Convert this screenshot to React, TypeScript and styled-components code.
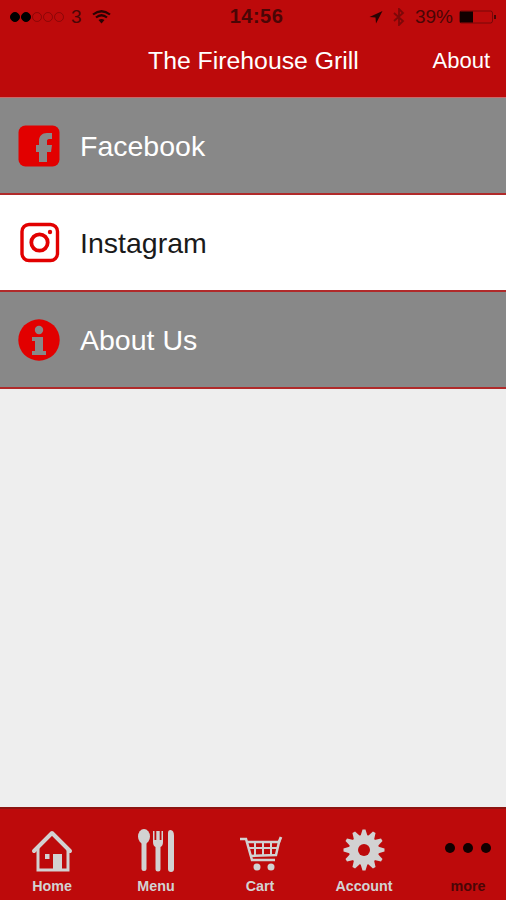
import React from "react";
import styled, { createGlobalStyle } from "styled-components";

const RED = "#bd0a0b";
const ICON_RED = "#e20000";
const GREY_ICON = "#d2d2d2";
const ROW_GREY = "#888888";
const DARK = "#4a0606";

const Global = createGlobalStyle`
  html, body { margin: 0; padding: 0; background: #eeeeee; }
  * { box-sizing: border-box; }
  body { font-family: "Liberation Sans", Arial, sans-serif; }
`;

const Screen = styled.div`
  width: 506px;
  height: 900px;
  display: flex;
  flex-direction: column;
  overflow: hidden;
  background: #eeeeee;
`;

const Header = styled.header`
  height: 98px;
  flex: none;
  background: ${RED};
  border-bottom: 1px solid #c96a6a;
  display: flex;
  flex-direction: column;
`;

const StatusBar = styled.div`
  height: 33px;
  padding: 0 9px 0 10px;
  display: grid;
  grid-template-columns: 1fr auto 1fr;
  align-items: center;
  color: ${DARK};
  font-size: 19px;
`;

const StatusLeft = styled.div`
  display: flex;
  align-items: center;
  gap: 7px;
`;

const StatusRight = styled.div`
  display: flex;
  align-items: center;
  justify-content: flex-end;
  gap: 6px;
`;

const Time = styled.span`
  padding-left: 6px;
  font-weight: 700;
  font-size: 20px;
  letter-spacing: 0.5px;
`;

const Dots = styled.div`
  display: flex;
  gap: 1px;
`;

const Dot = styled.span<{ $on?: boolean }>`
  width: 10px;
  height: 10px;
  border-radius: 50%;
  border: 1px solid #000;
  background: ${(p) => (p.$on ? "#000" : "transparent")};
  opacity: ${(p) => (p.$on ? 1 : 0.25)};
`;

const WifiGlyph = styled.svg`
  margin-left: 3px;
`;

const BluetoothGlyph = styled.svg`
  margin: 0 4px;
  opacity: 0.55;
`;

const NavBar = styled.div`
  flex: 1;
  display: flex;
  align-items: center;
  padding: 0 16px 8px 148px;
  justify-content: space-between;
  color: #fff;
`;

const Title = styled.span`
  font-size: 24.8px;
`;

const NavLink = styled.span`
  font-size: 22px;
`;

const List = styled.div`
  flex: 1;
`;

const Row = styled.div<{ $light?: boolean }>`
  height: 97px;
  padding: 1px 0 0 18px;
  display: flex;
  align-items: center;
  gap: 20px;
  background: ${(p) => (p.$light ? "#ffffff" : ROW_GREY)};
  color: ${(p) => (p.$light ? "#1a1a1a" : "#ffffff")};
  border-bottom: 2px solid #b02a2a;
  font-size: 28.5px;
`;

const RowLabel = styled.span`
  padding-top: 1px;
`;

const RowIcon = styled.svg`
  width: 42px;
  height: 42px;
  flex: none;
`;

const TabBar = styled.nav`
  height: 93px;
  flex: none;
  background: ${RED};
  border-top: 2px solid #8d1410;
  display: grid;
  grid-template-columns: repeat(5, 104px);
`;

const Tab = styled.div<{ $dark?: boolean }>`
  display: flex;
  flex-direction: column;
  align-items: center;
  justify-content: flex-end;
  padding-bottom: 6px;
  color: ${(p) => (p.$dark ? DARK : GREY_ICON)};
  font-size: 14.3px;
  font-weight: 700;
  gap: 3px;
`;

const TabIcon = styled.svg`
  height: 48px;
  width: 60px;
  flex: none;
`;

const FacebookIcon = () => (
  <RowIcon viewBox="0 0 42 42">
    <rect x="0.5" y="0.5" width="41" height="41" rx="7" fill={ICON_RED} />
    <path
      d="M21 37V27h-3v-7h3v-4c0-5 3-8 8-8h5v6h-3c-1.500 0-2 1-2 2v4h5l-1 7h-4v10z"
      fill={ROW_GREY}
    />
  </RowIcon>
);

const InstagramIcon = () => (
  <RowIcon viewBox="0 0 42 42">
    <rect x="4" y="2.500" width="35.500" height="36" rx="7" fill="none" stroke={ICON_RED} strokeWidth="3.400" />
    <circle cx="21.500" cy="20.500" r="8.200" fill="none" stroke={ICON_RED} strokeWidth="3.800" />
    <circle cx="32" cy="10" r="2.200" fill={ICON_RED} />
  </RowIcon>
);

const InfoIcon = () => (
  <RowIcon viewBox="0 0 42 42">
    <circle cx="21" cy="21" r="20.700" fill={ICON_RED} />
    <circle cx="21" cy="11" r="4.200" fill={ROW_GREY} />
    <path d="M14 18h11v14h3v4H14v-4h3v-10h-3z" fill={ROW_GREY} />
  </RowIcon>
);

const HomeIcon = () => (
  <TabIcon viewBox="0 0 60 48">
    <path
      d="M12 24 30 6l18 18"
      fill="none"
      stroke={GREY_ICON}
      strokeWidth="4"
      strokeLinecap="round"
      strokeLinejoin="round"
    />
    <path d="M16 21v22h30V21" fill="none" stroke={GREY_ICON} strokeWidth="3" />
    <rect x="31" y="27" width="9" height="16" fill={GREY_ICON} />
    <rect x="23" y="27" width="4.500" height="5" fill={GREY_ICON} />
  </TabIcon>
);

const MenuIcon = () => (
  <TabIcon viewBox="0 0 60 48">
    <ellipse cx="18" cy="9.500" rx="6" ry="7.500" fill={GREY_ICON} />
    <rect x="15.500" y="12" width="5" height="32" rx="2.500" fill={GREY_ICON} />
    <path
      d="M27 4h1.500v9h1.800V4h3.400v9h1.800V4H37v11q0 4-2.500 5v22a2.500 2.500 0 0 1-5 0V20q-2.500-1-2.500-5z"
      fill={GREY_ICON}
    />
    <path d="M42 42V6q0-3 2.500-3 3.500 0 3.500 6v33a3 3 0 0 1-6 0z" fill={GREY_ICON} />
  </TabIcon>
);

const CartIcon = () => (
  <TabIcon viewBox="0 0 60 48">
    <g fill="none" stroke={GREY_ICON} strokeWidth="2">
      <path d="M10 12h6l6 21h23" strokeWidth="2.500" />
      <path d="M17 15h32l-3 13-26 1" strokeWidth="2.500" />
      <path d="M18 21h30M25 15v14M33 15v14M41 15v13" />
    </g>
    <path d="M48.500 16l2.500-6" stroke={GREY_ICON} strokeWidth="2.800" />
    <circle cx="27" cy="40" r="3.500" fill={GREY_ICON} />
    <circle cx="41" cy="40" r="3.500" fill={GREY_ICON} />
  </TabIcon>
);

const gearTeeth = Array.from({ length: 12 }, (_, i) => i * 30);

const GearIcon = () => (
  <TabIcon viewBox="0 0 60 48">
    <g fill={GREY_ICON}>
      {gearTeeth.map((deg) => (
        <path key={deg} d="M26.200 10 28.500 2.500h3L33.800 10z" transform={`rotate(${deg} 30 23)`} />
      ))}
      <circle cx="30" cy="23" r="15" />
    </g>
    <circle cx="30" cy="23" r="6" fill={RED} />
  </TabIcon>
);

const MoreIcon = () => (
  <TabIcon viewBox="0 0 60 48">
    <circle cx="12" cy="21" r="5" fill="#120000" />
    <circle cx="30" cy="21" r="5" fill="#120000" />
    <circle cx="48" cy="21" r="5" fill="#120000" />
  </TabIcon>
);

const rows = [
  { label: "Facebook", icon: <FacebookIcon /> },
  { label: "Instagram", icon: <InstagramIcon />, light: true },
  { label: "About Us", icon: <InfoIcon /> },
];

const tabs = [
  { label: "Home", icon: <HomeIcon /> },
  { label: "Menu", icon: <MenuIcon /> },
  { label: "Cart", icon: <CartIcon /> },
  { label: "Account", icon: <GearIcon /> },
  { label: "more", icon: <MoreIcon />, dark: true },
];

const App = () => {
  return (
    <Screen>
      <Global />
      <Header>
        <StatusBar>
          <StatusLeft>
            <Dots>
              <Dot $on />
              <Dot $on />
              <Dot />
              <Dot />
              <Dot />
            </Dots>
            <span>3</span>
            <WifiGlyph width="19" height="15" viewBox="0 0 19 15">
              <path
                d="M1 5.500q8.500-6.500 17 0M4 8.500q5.500-4.500 11 0"
                fill="none"
                stroke="#2a0303"
                strokeWidth="2.200"
              />
              <path d="M6.500 11q3-2 6 0l-3 3.500z" fill="#2a0303" />
            </WifiGlyph>
          </StatusLeft>
          <Time>14:56</Time>
          <StatusRight>
            <svg width="14" height="14" viewBox="0 0 14 14">
              <path d="M13.500 1 .5 7l6 .5.5 6z" fill="#2a0303" />
            </svg>
            <BluetoothGlyph width="12" height="18" viewBox="0 0 12 18">
              <path d="M1 5l9 8-4 4V1l4 4-9 8" fill="none" stroke={DARK} strokeWidth="1.800" />
            </BluetoothGlyph>
            <span>39%</span>
            <svg width="38" height="14" viewBox="0 0 38 14">
              <rect x="0.5" y="1" width="33" height="12" rx="2" fill="none" stroke={DARK} strokeOpacity="0.6" />
              <rect x="1" y="1.500" width="13" height="11" fill="#120000" />
              <rect x="35" y="5" width="2" height="4" fill={DARK} />
            </svg>
          </StatusRight>
        </StatusBar>
        <NavBar>
          <Title>The Firehouse Grill</Title>
          <NavLink>About</NavLink>
        </NavBar>
      </Header>
      <List>
        {rows.map((row) => (
          <Row key={row.label} $light={row.light}>
            {row.icon}
            <RowLabel>{row.label}</RowLabel>
          </Row>
        ))}
      </List>
      <TabBar>
        {tabs.map((tab) => (
          <Tab key={tab.label} $dark={tab.dark}>
            {tab.icon}
            <span>{tab.label}</span>
          </Tab>
        ))}
      </TabBar>
    </Screen>
  );
};

export default App;
